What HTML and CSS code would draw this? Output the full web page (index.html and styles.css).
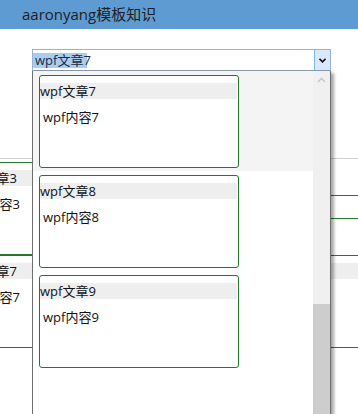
FILE: index.html
```html
<!DOCTYPE html>
<html>
<head>
<meta charset="UTF-8">
<title>aaronyang模板知识</title>
<link rel="stylesheet" href="styles.css">
</head>
<body>
<div class="titlebar">aaronyang模板知识</div>
<div class="content">
	<!-- 下拉框 (打开状态) -->
	<div class="combo">
		<div class="combo-box">
			<span class="combo-text">wpf文章7</span>
			<span class="combo-btn">
				<svg width="7" height="5" viewBox="0 0 7 5"><path d="M0.5 0.8 L3.5 3.8 L6.5 0.8" fill="none" stroke="#111" stroke-width="1.6"/></svg>
			</span>
		</div>
		<div class="popup">
			<div class="popup-list">
				<div class="item selected">
					<div class="card">
						<div class="card-title">wpf文章7</div>
						<div class="card-body">wpf内容7</div>
					</div>
				</div>
				<div class="item">
					<div class="card">
						<div class="card-title">wpf文章8</div>
						<div class="card-body">wpf内容8</div>
					</div>
				</div>
				<div class="item">
					<div class="card">
						<div class="card-title">wpf文章9</div>
						<div class="card-body">wpf内容9</div>
					</div>
				</div>
			</div>
			<div class="scrollbar">
				<div class="scroll-up">
					<svg width="9" height="6" viewBox="0 0 9 6"><path d="M1 5 L4.5 1.5 L8 5" fill="none" stroke="#c4c4c4" stroke-width="1.3"/></svg>
				</div>
				<div class="scroll-track"></div>
				<div class="scroll-thumb"></div>
			</div>
		</div>
	</div>

	<!-- 后面的列表 -->
	<div class="bg-list">
		<div class="bg-row">
			<div class="card bg-card short">
				<div class="card-title">wpf文章3</div>
				<div class="card-body">wpf内容3</div>
			</div>
			<div class="bg-side"></div>
		</div>
		<div class="bg-row">
			<div class="card bg-card wide">
				<div class="card-title">wpf文章7</div>
				<div class="card-body">wpf内容7</div>
			</div>
		</div>
	</div>
</div>
</body>
</html>
```

FILE: styles.css
```css
html,body{margin:0;height:414px;overflow:hidden;background:#fff}
body{font-family:"Open Sans","Noto Sans CJK SC",sans-serif;font-size:13px;color:#111}

.titlebar{height:29px;line-height:29px;padding-left:22px;background:#5e9bd2;color:#1e1e1e;font-size:15px}

.content{position:relative}

.combo{position:relative;width:299px;margin:20px 0 0 32px;z-index:2}
.combo-box{display:flex;align-items:center;height:22px;box-sizing:border-box;border:1px solid #95b4d8;border-bottom-color:#8a9bb0;background:#fff}
.combo-text{flex:1;padding-left:2px;line-height:15px;background:linear-gradient(#a9cdef,#a9cdef) no-repeat 0 0/54px 15px;color:#1b2a45}
.combo-btn{display:flex;align-items:center;justify-content:center;width:16px;height:100%;box-sizing:border-box;border-left:1px solid #7eb4ea;background:#d8e9fa}

.popup{position:absolute;top:100%;left:0;width:299px;height:360px;box-sizing:border-box;display:flex;border:1px solid #6e6e6e;border-top:none;background:#fff;box-shadow:3px 2px 3px rgba(0,0,0,0.35)}
.popup-list{width:280px}
.item{height:100px;padding:4px 0 0 6px;box-sizing:border-box}
.item.selected{background:#f4f4f4}

.card{width:200px;height:93px;box-sizing:border-box;border:1px solid #22772a;border-radius:3px;background:#fff}
.card-title{margin:7px 1px 0 0;height:16px;line-height:16px;background:#eeeeee}
.card-body{margin-top:10px;padding-left:3px;line-height:16px}

.scrollbar{width:17px;display:flex;flex-direction:column;background:#f0f0f0}
.scroll-up{height:17px;display:flex;align-items:center;justify-content:center}
.scroll-track{height:216px}
.scroll-thumb{flex:1;background:#cdcdcd}

.bg-list{margin:87px 0 0 -40px;padding-top:3px;border-top:1px solid #cfcfcf;width:440px}
.bg-row{display:flex}
.bg-card.short{width:330px}
.bg-card.wide{width:440px}
.bg-side{flex:1;height:24px;margin-top:33px;box-sizing:border-box;border-top:1px solid #22772a;border-bottom:1px solid #22772a}
```
